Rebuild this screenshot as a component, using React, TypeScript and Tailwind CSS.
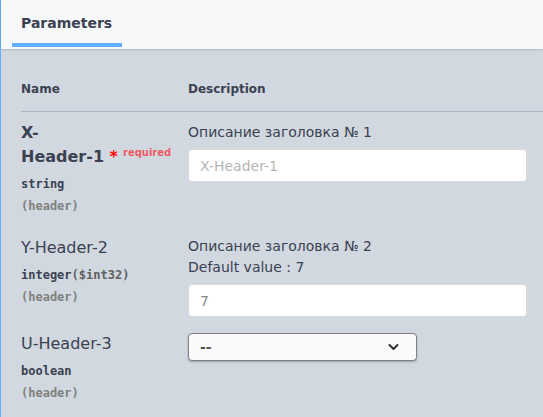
export default function App() {
  const mono = "font-['DejaVu_Sans_Mono',monospace]";
  return (
    <div className="min-h-[417px] w-full border-l border-[#61affe] bg-[#d1d8e0] font-['DejaVu_Sans',sans-serif] text-[#3b4151]">
      <div className="relative h-[49px] bg-[#f7f8f9] shadow-[0_1px_2px_rgba(0,0,0,0.15)]">
        <div className="ml-[11px] flex h-full w-[110px] flex-col px-[9px] pt-[14px]">
          <span className="text-[14px] font-bold leading-[18px]">Parameters</span>
          <div className="-mx-[9px] mt-[11px] h-[4px] bg-[#61affe]" />
        </div>
      </div>

      <div className="pl-[20px]">
        <div className="flex border-b border-[#aab3bf] pb-[15px] pt-[33px] text-[12px] font-bold leading-[14px]">
          <div className="w-[167px]">Name</div>
          <div>Description</div>
        </div>

        {/* Row 1 */}
        <div className="flex items-start pb-[10px] pt-[9px]">
          <div className="w-[167px] pr-[10px]">
            <div className="text-[16px] font-bold leading-[24px]">
              <div className="h-[24px]">X-</div>
              <div className="h-[24px] whitespace-nowrap">
                Header-1
                <span className="text-[#ff0000] leading-none">&nbsp;*</span>
                <span className="relative -top-[6px] pl-[5px] text-[10px] leading-none text-[rgba(255,0,0,0.6)]">required</span>
              </div>
            </div>
            <div className={`${mono} pb-[2px] pt-[5px] text-[12px] font-bold leading-[20px]`}>string</div>
            <div className={`${mono} text-[12px] font-bold leading-[20px] text-[#808080]`}>(header)</div>
          </div>
          <div className="flex flex-col">
            <div className="text-[14px] leading-[22px]">Описание заголовка № 1</div>
            <input
              className="mt-[6px] h-[33px] w-[339px] rounded-[4px] border border-[#d9d9d9] bg-white px-[11px] text-[14px] text-[#3b4151] placeholder:text-[#b5b5b5] outline-none"
              placeholder="X-Header-1"
            />
          </div>
        </div>

        {/* Row 2 */}
        <div className="flex items-start pb-[5px] pt-[10px]">
          <div className="w-[167px] pr-[10px]">
            <div className="text-[16px] leading-[24px]">Y-Header-2</div>
            <div className={`${mono} pb-[2px] pt-[5px] text-[12px] font-bold leading-[20px]`}>
              <span>integer</span>
              <span className="text-[#606060]">($int32)</span>
            </div>
            <div className={`${mono} text-[12px] font-bold leading-[20px] text-[#808080]`}>(header)</div>
          </div>
          <div className="flex flex-col">
            <div className="text-[14px] leading-[21px]">Описание заголовка № 2</div>
            <div className="text-[14px] leading-[21px]">Default value : 7</div>
            <input
              className="mt-[6px] h-[33px] w-[339px] rounded-[4px] border border-[#d9d9d9] bg-white px-[11px] text-[14px] text-[#8a8a8a] outline-none"
              defaultValue="7"
            />
          </div>
        </div>

        {/* Row 3 */}
        <div className="flex items-start pb-[10px] pt-[10px]">
          <div className="w-[167px] pr-[10px]">
            <div className="text-[16px] leading-[24px]">U-Header-3</div>
            <div className={`${mono} pb-[2px] pt-[5px] text-[12px] font-bold leading-[20px]`}>boolean</div>
            <div className={`${mono} text-[12px] font-bold leading-[20px] text-[#808080]`}>(header)</div>
          </div>
          <div className="pt-[1px]">
            <div className="flex h-[28px] w-[229px] items-center justify-between rounded-[4px] border border-[#7d8088] bg-[#fafafa] pl-[11px] pr-[17px] shadow-[0_1px_2px_rgba(0,0,0,0.25)]">
              <span className="text-[14px] font-bold leading-[18px] text-[#555]">--</span>
              <svg width="11" height="8" viewBox="0 0 11 8" fill="none">
                <path d="M1.5 2 L5.5 6 L9.5 2" stroke="#303030" strokeWidth="2" strokeLinecap="round" strokeLinejoin="round" />
              </svg>
            </div>
          </div>
        </div>
      </div>
    </div>
  );
}
